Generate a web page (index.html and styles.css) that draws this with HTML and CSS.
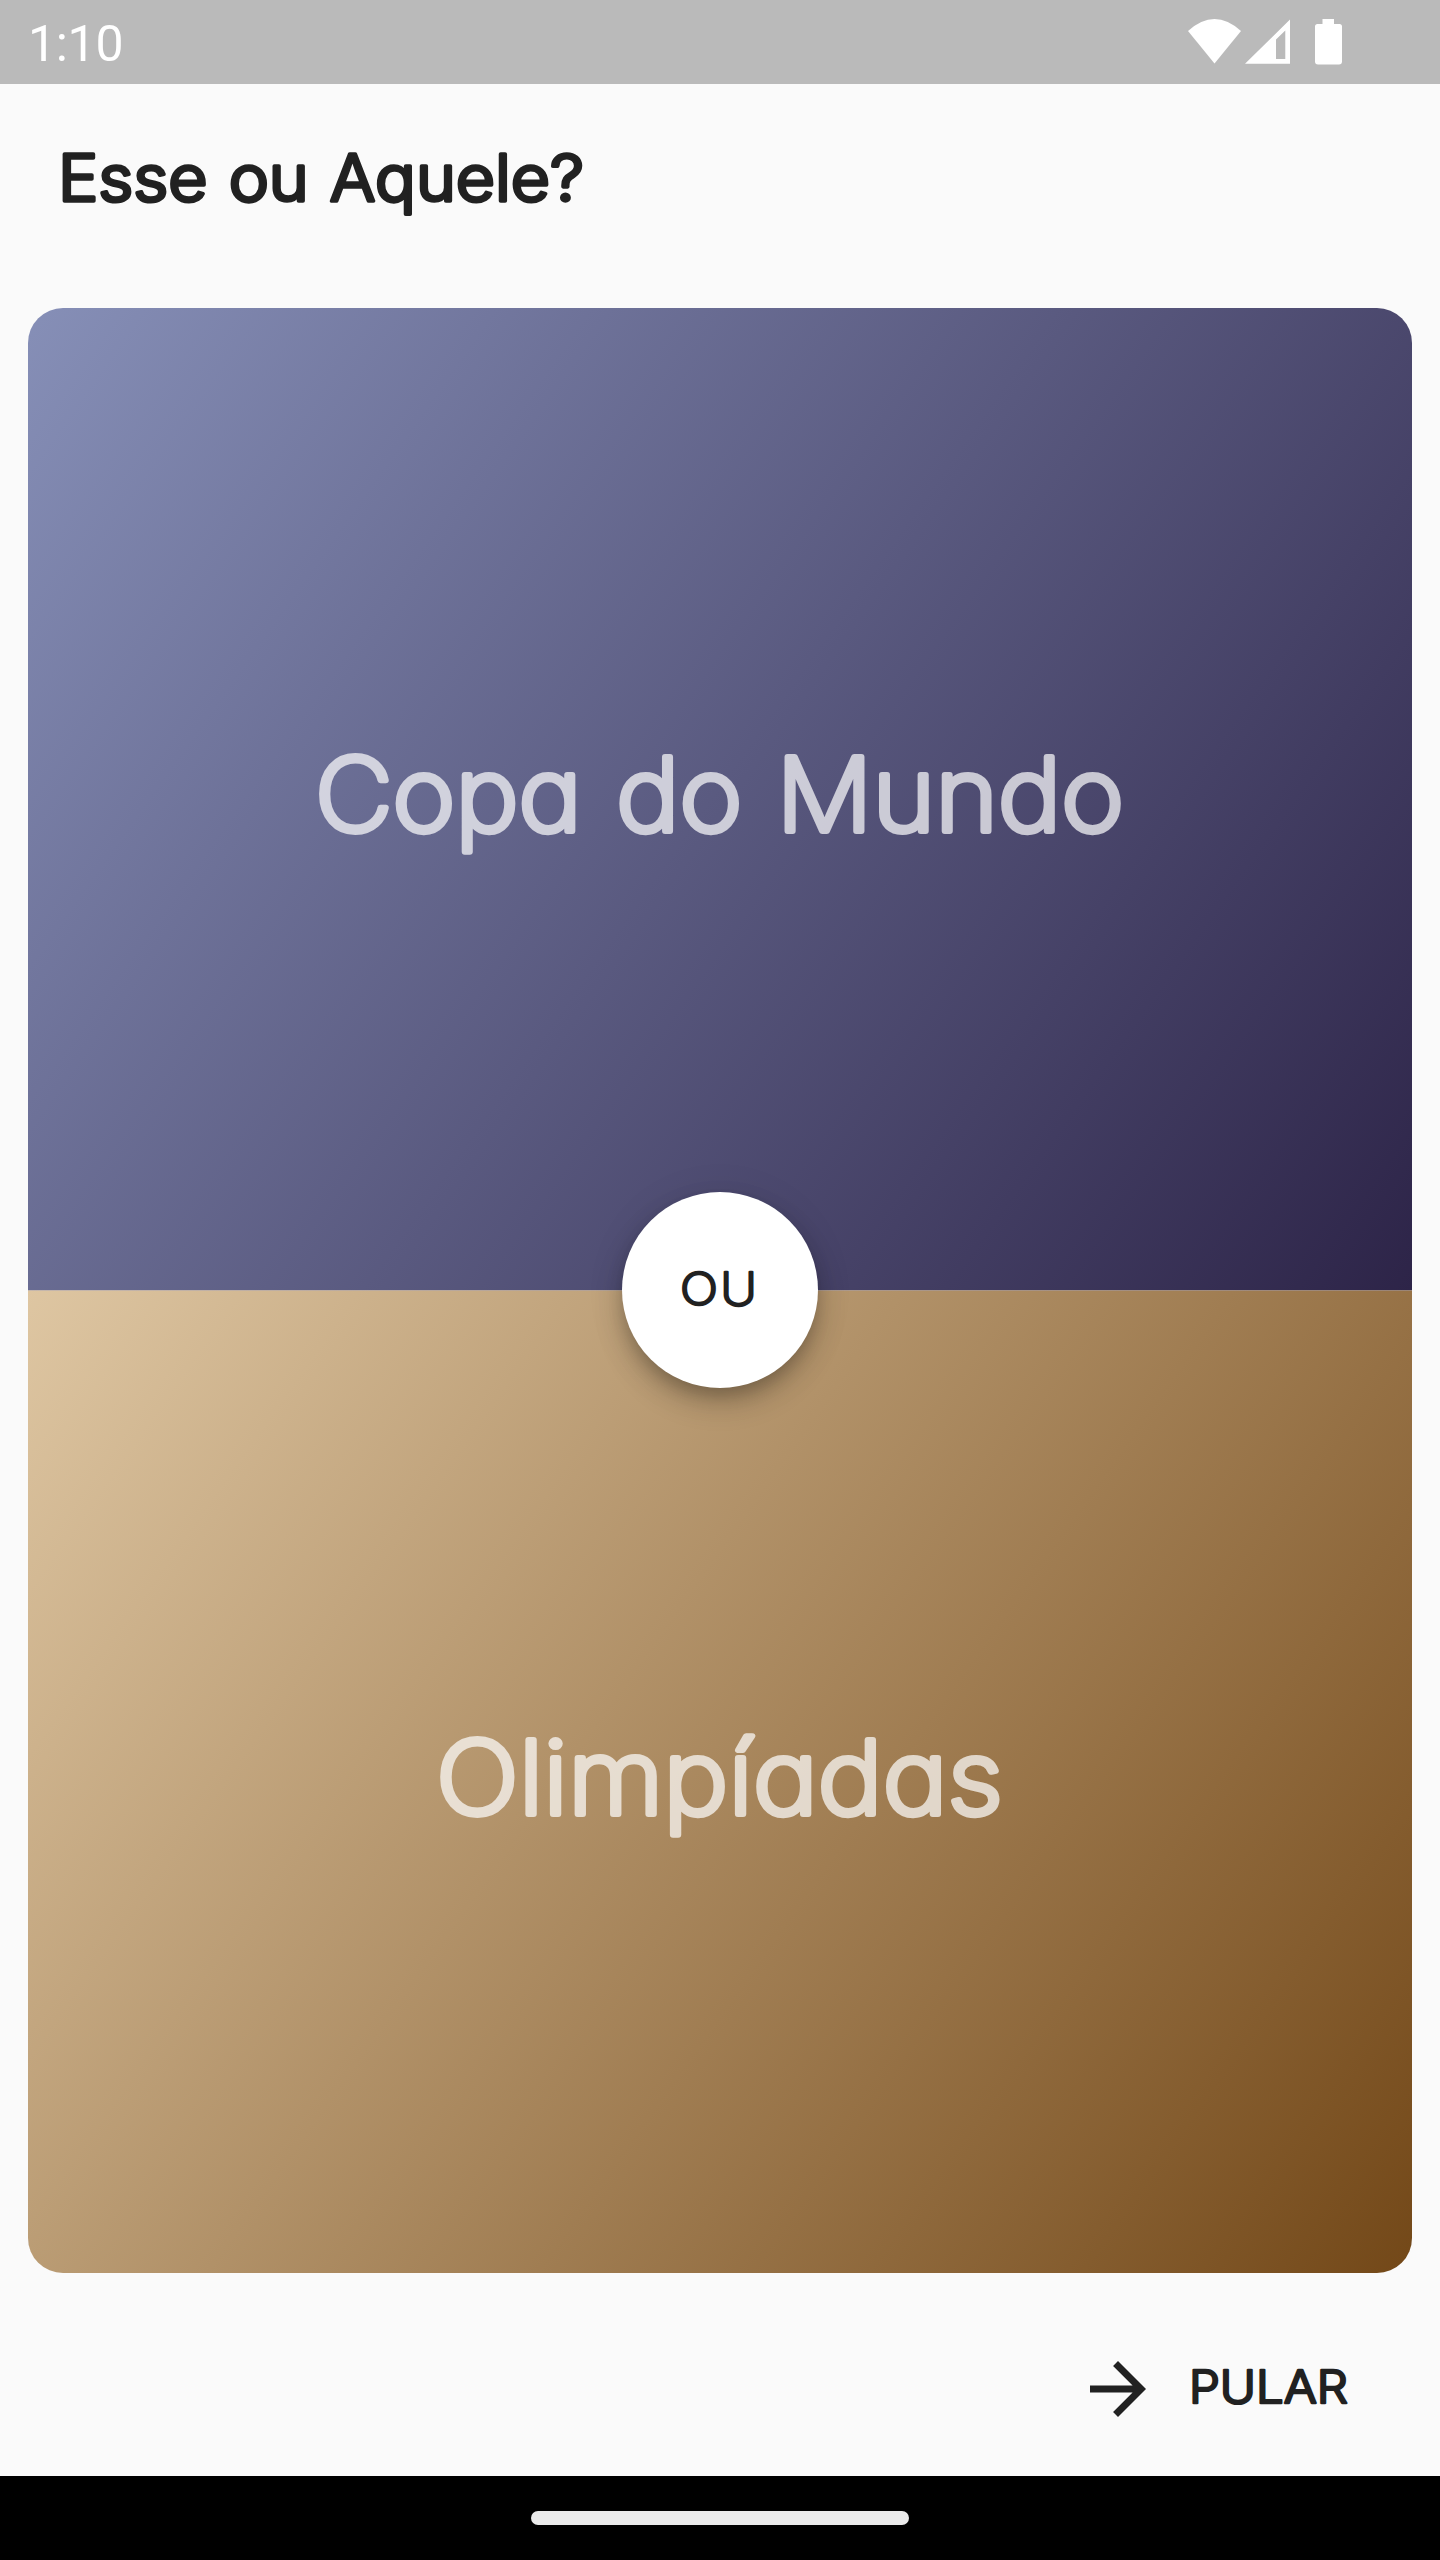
FILE: index.html
```html
<!DOCTYPE html>
<html lang="pt-BR">
<head>
<meta charset="utf-8">
<title>Esse ou Aquele?</title>
<link rel="stylesheet" href="styles.css">
</head>
<body>
<div class="screen">
  <div class="status-bar">
    <span class="time">1:10</span>
    <svg class="status-icons" viewBox="1188 0 156 84" fill="#fff">
      <path d="M1188 31Q1214.500 7 1241 31L1214.500 63.500Z"/>
      <path fill-rule="evenodd" d="M1245 63.800L1290 19.500V63.800ZM1276 39.500V59H1285.300V30.500Z"/>
      <path d="M1322.500 19H1334V24H1339.500Q1342 24 1342 26.500V61.500Q1342 64.500 1339 64.500H1318Q1315 64.500 1315 61.500V26.500Q1315 24 1317.500 24H1322.500Z"/>
    </svg>
  </div>
  <header class="app-bar">
    <svg class="rounded title" width="528" height="224"><text x="0" y="117" textLength="526" lengthAdjust="spacingAndGlyphs">Esse ou Aquele?</text></svg>
  </header>
  <main class="choices">
    <button class="choice choice-first">
      <svg class="rounded label" width="880" height="130"><text x="35" y="97" textLength="809" lengthAdjust="spacingAndGlyphs">Copa do Mundo</text></svg>
    </button>
    <button class="choice choice-second">
      <svg class="rounded label" width="880" height="130"><text x="156" y="97" textLength="567" lengthAdjust="spacingAndGlyphs">Olimpíadas</text></svg>
    </button>
    <div class="divider">
      <svg class="rounded divider-text" width="80" height="60"><text x="0" y="45" textLength="79" lengthAdjust="spacingAndGlyphs">OU</text></svg>
    </div>
  </main>
  <footer class="actions">
    <button class="skip">
      <svg class="arrow" viewBox="0 0 24 24"><path d="M12 4l-1.410 1.410L16.170 11H4v2h12.170l-5.580 5.590L12 20l8-8z" fill="#212121"/></svg>
      <svg class="rounded skip-text" width="160" height="60"><text x="-1" y="43.500" textLength="159" lengthAdjust="spacingAndGlyphs">PULAR</text></svg>
    </button>
  </footer>
  <div class="nav-bar"><div class="handle"></div></div>
</div>
</body>
</html>
```
FILE: styles.css
```css
* { box-sizing: border-box; }
body { margin: 0; }
button { border: 0; padding: 0; margin: 0; background: none; color: inherit; font: inherit; }
.screen {
  width: 1440px;
  height: 2560px;
  display: flex;
  flex-direction: column;
  overflow: hidden;
  background: #fafafa;
  color: #212121;
  font-family: Inter, "Noto Sans", sans-serif;
  font-feature-settings: "cv11" 1;
}
/* A thin face with a round-joined stroke gives the soft letter ends. */
.rounded {
  display: block;
  flex: none;
  overflow: visible;
  fill: currentColor;
  stroke: currentColor;
  stroke-linejoin: round;
  stroke-linecap: round;
}
.status-bar {
  height: 84px;
  display: flex;
  justify-content: space-between;
  padding: 0 96px 0 28px;
  background: #bababa;
  color: #fff;
}
.time { font: 400 50px/88px Roboto, sans-serif; letter-spacing: -0.3px; }
.status-icons { width: 156px; height: 84px; }
.app-bar { height: 224px; padding-left: 58px; }
.title { font-size: 64px; font-weight: 280; stroke-width: 3.6px; word-spacing: 2px; }
.choices {
  position: relative;
  height: 1965px;
  margin: 0 28px;
  display: grid;
  grid-template-rows: 982px 983px;
}
.choice {
  display: flex;
  align-items: center;
  justify-content: center;
  overflow: hidden;
}
.choice-first {
  border-radius: 35px 35px 0 0;
  background: linear-gradient(125.36deg, #868fb7, #2d2448);
}
.choice-second {
  border-radius: 0 0 35px 35px;
  background: linear-gradient(125.36deg, #dec6a2, #734818);
  box-shadow: inset 0 1px rgba(160, 160, 190, 0.4);
}
.label {
  font-size: 102px;
  font-weight: 200;
  stroke-width: 6px;
  word-spacing: 4px;
  color: #fff;
  opacity: 0.7;
}
.divider {
  position: absolute;
  left: 594px;
  top: 884px;
  width: 196px;
  height: 196px;
  display: flex;
  align-items: center;
  justify-content: center;
  border-radius: 50%;
  background: #fff;
  box-shadow: 0 10px 17px -3px rgba(0, 0, 0, 0.2), 0 16px 30px rgba(0, 0, 0, 0.16), 0 3px 40px rgba(0, 0, 0, 0.08);
}
.divider-text { font-size: 45px; font-weight: 200; stroke-width: 2.4px; letter-spacing: 2px; }
.actions { height: 203px; display: flex; justify-content: flex-end; padding-right: 90px; }
.skip { display: flex; align-items: center; gap: 30px; padding-top: 28px; }
.arrow { width: 84px; height: 84px; }
.skip-text { font-size: 45px; font-weight: 280; stroke-width: 2.4px; }
.nav-bar {
  height: 84px;
  display: flex;
  align-items: center;
  justify-content: center;
  background: #000;
}
.handle { width: 378px; height: 14px; border-radius: 7px; background: #ebebeb; }
```
